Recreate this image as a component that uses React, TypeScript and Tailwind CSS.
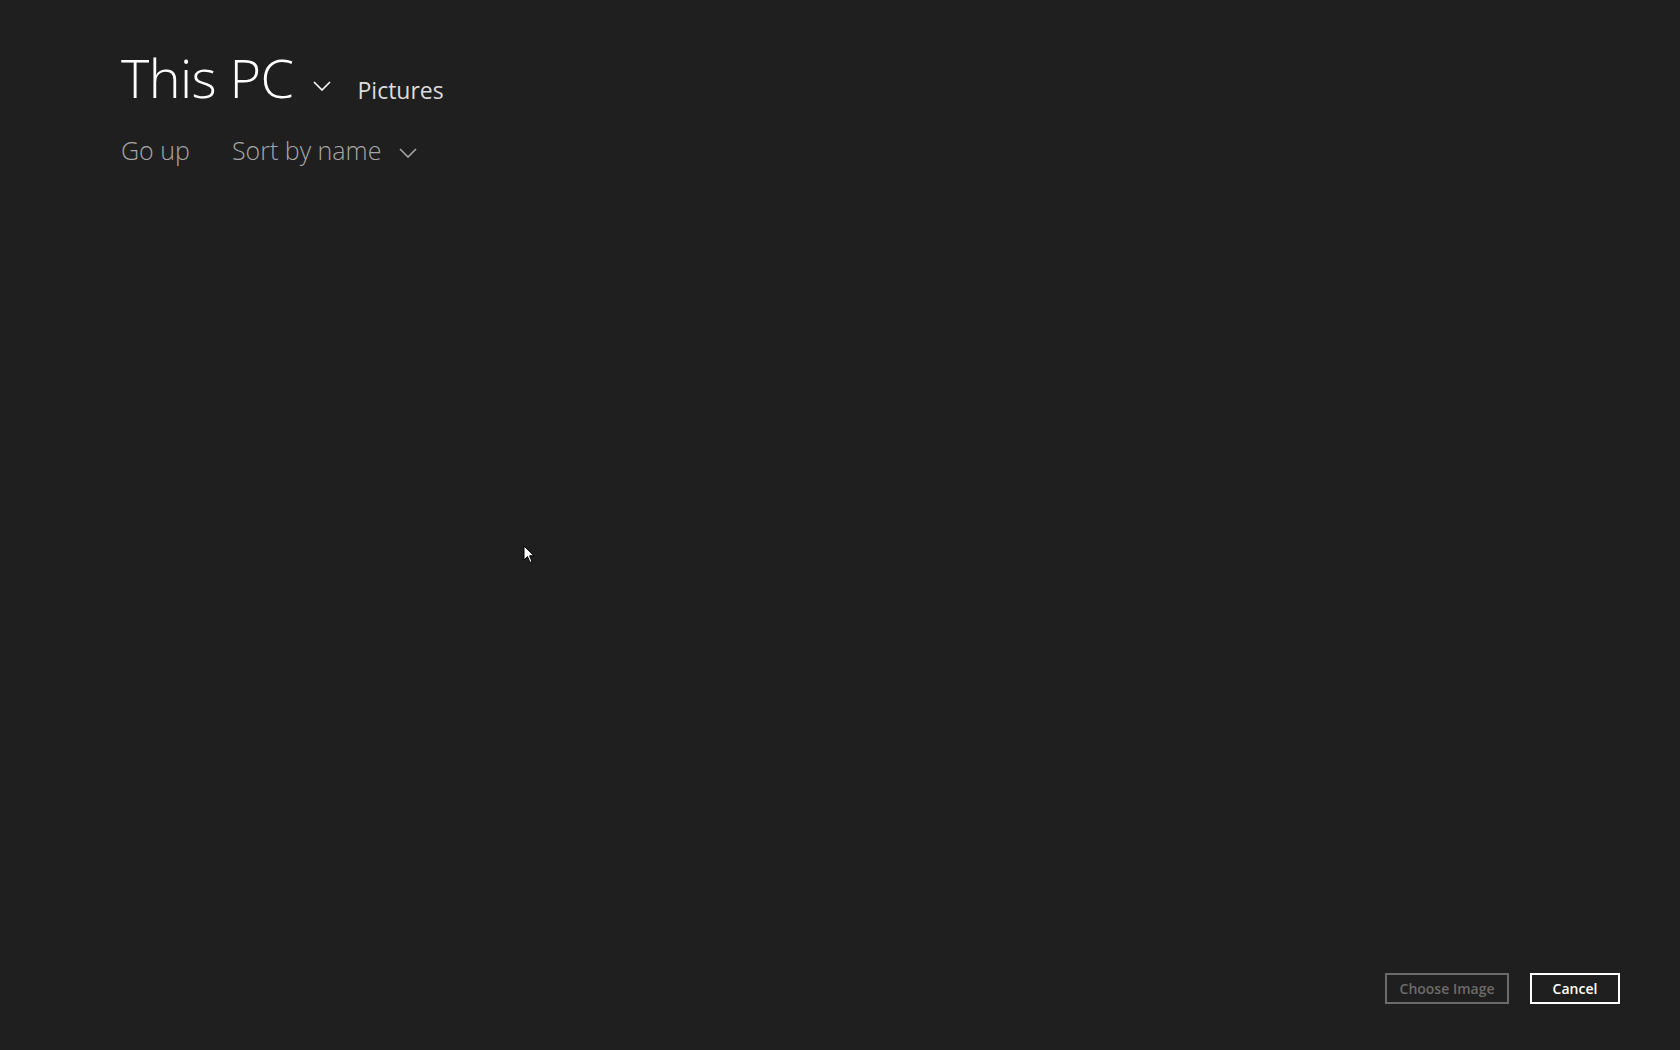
const font = { fontFamily: '"Open Sans", "Noto Sans", sans-serif' }

function Chevron({ className }: { className?: string }) {
  return (
    <svg className={className} width="18" height="10" viewBox="0 0 18 10" fill="none">
      <path d="M1 1 L9 9 L17 1" stroke="currentColor" strokeWidth="1.6" />
    </svg>
  )
}

function Cursor() {
  return (
    <svg
      className="absolute left-[523px] top-[545px]"
      width="12"
      height="19"
      viewBox="0 0 12 19"
    >
      <path
        d="M1 1 L1 15 L4.5 11.5 L7 17.5 L9 16.6 L6.6 10.8 L11 10.8 Z"
        fill="#ffffff"
        stroke="#000000"
        strokeWidth="1"
        strokeLinejoin="round"
      />
    </svg>
  )
}

export default function App() {
  return (
    <div
      className="relative flex h-[1050px] w-[1680px] flex-col justify-between overflow-hidden bg-[#1f1f1f] pl-[121px] pr-[60px] pb-[46px] pt-[44px]"
      style={font}
    >
      {/* Header */}
      <div className="flex flex-col">
        <div className="flex items-end">
          <h1 className="text-[54px] font-light leading-[66px] tracking-[-0.6px] text-white">
            This PC
          </h1>
          <Chevron className="mb-[19px] ml-[19px] text-white" />
          <span className="mb-[4px] ml-[27px] text-[23px] font-normal leading-[32px] text-[#dcdcdc]">
            Pictures
          </span>
        </div>

        <div className="mt-[24px] flex items-center text-[25px] font-light leading-[32px] text-[#a6a6a6]">
          <span>Go up</span>
          <span className="ml-[42px]">Sort by name</span>
          <Chevron className="ml-[18px] mt-[6px] text-[#a6a6a6]" />
        </div>
      </div>

      {/* Footer buttons */}
      <div className="flex justify-end gap-[21px]">
        <button className="h-[31px] w-[124px] border-2 border-[#6b6b6b] text-[14px] font-semibold text-[#6b6b6b]">
          Choose Image
        </button>
        <button className="h-[31px] w-[90px] border-2 border-white text-[14px] font-semibold text-white">
          Cancel
        </button>
      </div>

      <Cursor />
    </div>
  )
}
